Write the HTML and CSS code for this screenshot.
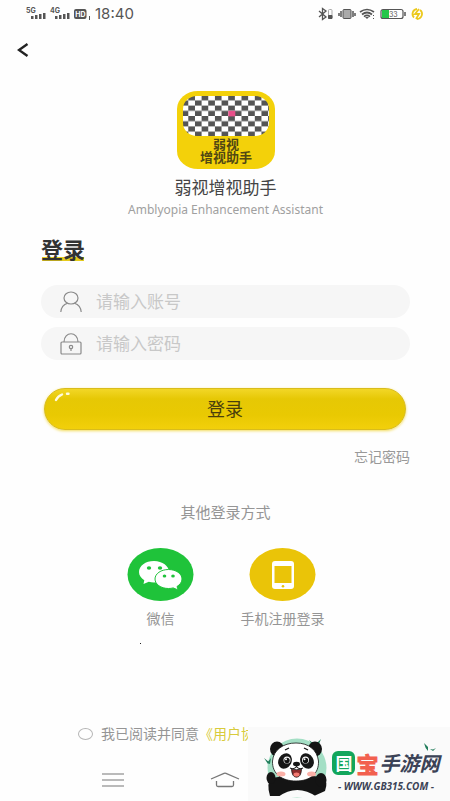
FILE: index.html
```html
<!DOCTYPE html>
<html lang="zh-CN">
<head>
<meta charset="utf-8">
<meta name="viewport" content="width=device-width, initial-scale=1">
<title>登录</title>
<link rel="stylesheet" href="styles.css">
</head>
<body>
<div class="screen">
  <header class="status">
    <div class="status-side">
      <svg width="65" height="14" viewBox="0 0 65 14" fill="#555">
        <g font-family="Inter, sans-serif" font-weight="700" font-size="7"><text x="0" y="6">5G</text><text x="24" y="6">4G</text></g>
        <path d="M5 9h2.500v3H5zM9 8h2.500v4H9zM13 7h2.500v5H13zM17 6h2.500v6H17zM29 9h2.500v3H29zM33 8h2.500v4H33zM37 7h2.500v5H37zM41 6h2.500v6H41z"/>
        <rect x="48" y="2" width="12.500" height="10" rx="2"/>
        <text x="49.300" y="9.500" fill="#fff" font-family="Inter, sans-serif" font-weight="700" font-size="7">HD</text>
        <path d="M63 9h1v4h-1z"/>
      </svg>
      <time class="clock">18:40</time>
    </div>
    <svg width="106" height="14" viewBox="0 0 106 14" fill="none" stroke="#555">
      <path d="M1 4l7 6-3.500 2.500v-11L8 4l-7 6" stroke-width="1.300"/>
      <rect x="10.500" y="2.500" width="3.500" height="9" rx="1" stroke="#aaa"/><path d="M10.500 8.500h3.500v3h-3.500z" fill="#555"/>
      <rect x="25" y="2.500" width="8" height="9" rx="1" fill="#aaa"/><path d="M23 4v6M35 4v6M21 6v3M37 6v3" stroke-width="1.500"/>
      <path d="M42 5q7-5 14 0M44 7.500q5-4 10 0M46 9.700q3-2.500 6 0" stroke-width="1.700"/><path d="M47 10h4l-2 2zM55 8h1v1h-1zM55 11h1v1h-1z" fill="#555" stroke="none"/>
      <rect x="63" y="2.500" width="22" height="9" rx="2" stroke-width="1.200"/><path d="M87 5v4" stroke-width="1.500"/>
      <path d="M64 3h7v8h-7z" fill="#25c64a" stroke="none"/>
      <text x="71" y="9.500" font-family="Inter, sans-serif" font-size="7" fill="#555" stroke="none">33</text>
      <path d="M96 10.500a5 5 0 0 1 3-8.500M102 3a5 5 0 0 1-3 9M101 2l-4 5h4l-3 5" stroke="#ecc91d" stroke-width="1.800"/>
    </svg>
  </header>

  <nav class="topbar">
    <button class="back" type="button" aria-label="返回">
      <svg width="12" height="14" viewBox="0 0 12 14" fill="none" stroke="#222" stroke-width="2.400"><path d="M10.500 1L2 7l8.500 6"/></svg>
    </button>
  </nav>

  <main class="content">
    <section class="brand">
      <svg class="logo" width="98" height="78" viewBox="0 0 98 78">
        <defs>
          <pattern id="check" x="11.300" y="4.200" width="13.300" height="10.400" patternUnits="userSpaceOnUse">
            <rect width="13.300" height="10.400" fill="#fff"/>
            <rect width="6.650" height="5.200" fill="#555"/><rect x="6.650" y="5.200" width="6.650" height="5.200" fill="#555"/>
          </pattern>
        </defs>
        <rect width="98" height="78" rx="21" ry="18" fill="#f3d10a"/>
        <rect x="6" y="5" width="86" height="40" rx="14" ry="13" fill="url(#check)"/>
        <rect x="51.300" y="19.800" width="7" height="5.600" fill="#e8508a"/>
        <g class="logo-text"><text x="49" y="58">弱视</text><text x="49" y="71">增视助手</text></g>
      </svg>
      <h1 class="app-name">弱视增视助手</h1>
      <p class="app-sub">Amblyopia Enhancement Assistant</p>
    </section>

    <form class="login">
      <h2 class="heading">登录</h2>
      <label class="field">
        <svg width="22" height="22" viewBox="0 0 22 22" fill="none" stroke="#8a8a8a" stroke-width="1.200"><ellipse cx="11" cy="7" rx="7" ry="6"/><path d="M.8 21c.4-5 3-7.500 6.700-8.700M14.500 12.300c3.700 1.200 6.300 3.700 6.700 8.700"/></svg>
        <input type="text" placeholder="请输入账号" aria-label="请输入账号">
      </label>
      <label class="field">
        <svg width="22" height="22" viewBox="0 0 22 22" fill="none" stroke="#8a8a8a" stroke-width="1.200"><rect x="1" y="9" width="20" height="12" rx="1"/><path d="M4 9c0-11 14-11 14 0"/><circle cx="11" cy="14" r="1.700"/><path d="M11 15.500V18"/></svg>
        <input type="password" placeholder="请输入密码" aria-label="请输入密码">
      </label>
      <button class="submit" type="submit">
        <svg class="shine" width="18" height="10" viewBox="0 0 18 10" fill="none" stroke="#fffbe0" stroke-width="2.400" stroke-linecap="round"><path d="M2 8q2-4 6-5.500M13 1.800h1.500"/></svg>
        登录
      </button>
      <a class="forgot" href="#">忘记密码</a>
    </form>

    <section class="other">
      <h3 class="other-title">其他登录方式</h3>
      <div class="options">
        <button class="option" type="button">
          <svg width="67" height="53" viewBox="0 0 67 53">
            <ellipse cx="33.500" cy="26.500" rx="33" ry="26.500" fill="#1fc33a"/>
            <path d="M27 13c-8.500 0-15 4.800-15 11 0 3.300 2 6.200 5.300 8.200L16.500 36l5.300-2.200c1.600.5 3.300.7 5.200.7 8.500 0 15-4.500 15-10.500S35.500 13 27 13z" fill="#fff"/>
            <path d="M41.500 21.500c-7.500 0-13.500 4.200-13.500 9.500s6 9.500 13.500 9.500c1.700 0 3.300-.2 4.700-.6l5 2.100-1.200-3.500c3-1.800 5-4.500 5-7.500 0-5.300-6-9.500-13.500-9.500z" fill="#fff" stroke="#1fc33a"/>
            <g fill="#1fc33a"><ellipse cx="22" cy="20" rx="2.200" ry="1.800"/><ellipse cx="33" cy="20" rx="2.200" ry="1.800"/><ellipse cx="37.500" cy="28" rx="1.800" ry="1.500"/><ellipse cx="46" cy="28" rx="1.800" ry="1.500"/></g>
          </svg>
          <span>微信</span>
        </button>
        <button class="option" type="button">
          <svg width="67" height="53" viewBox="0 0 67 53">
            <ellipse cx="33.500" cy="26.500" rx="33" ry="26.500" fill="#eac408"/>
            <rect x="23" y="13" width="22" height="28" rx="3" fill="#fff"/>
            <path d="M25.500 18h17v17h-17z" fill="#eac408"/><circle cx="34" cy="38.200" r="1.300" fill="#eac408"/>
          </svg>
          <span>手机注册登录</span>
        </button>
      </div>
      <div class="speck"></div>
    </section>

    <div class="agree">
      <input type="checkbox" id="agree">
      <label for="agree">我已阅读并同意<a href="#">《用户协议》</a></label>
    </div>
  </main>

  <nav class="sysnav">
    <button type="button" aria-label="菜单"><svg width="22" height="14" viewBox="0 0 22 14" stroke="#777" stroke-width="1.200"><path d="M0 1h22M0 7h22M0 13h22"/></svg></button>
    <button type="button" aria-label="主页"><svg width="30" height="16" viewBox="0 0 30 16" fill="none" stroke="#777" stroke-width="1.300"><path d="M1 7l13-5.700q1-.4 2 0L29 7M6.500 9v4q0 1.500 1.500 1.500h14q1.500 0 1.500-1.500V9"/></svg></button>
  </nav>

  <aside class="stamp">
    <svg class="panda" width="66" height="66" viewBox="4 3 66 66">
      <circle cx="37" cy="36" r="29.500" fill="#a4dfc5"/>
      <path d="M49 8l4 6 1-2zM57 11l4-4-2 5zM4 26l5 4-1 2zM7 31l4-5-1 6z" fill="#217d5b"/>
      <path d="M10 64Q6 50 12 46l25-4 24 3q8 4 4 14l-11 5z" fill="#141414"/>
      <path d="M18 65q19-14 39 0z" fill="#fafafa"/>
      <ellipse cx="11" cy="46" rx="4.500" ry="6" fill="#141414"/><ellipse cx="61" cy="48" rx="5.500" ry="7" fill="#141414"/>
      <ellipse cx="17" cy="17" rx="7" ry="7.500" fill="#141414"/><ellipse cx="55" cy="17" rx="7" ry="7.500" fill="#141414"/>
      <path d="M36 11c13 0 21 7 22.500 18C59 42 50 49 36 49S12 42 12.500 29C13.500 18 23 11 36 11z" fill="#fff" stroke="#141414" stroke-width=".8"/>
      <ellipse cx="25" cy="29" rx="6.500" ry="8" transform="rotate(30 25 29)" fill="#171717"/><ellipse cx="47" cy="29" rx="6.500" ry="8" transform="rotate(-30 47 29)" fill="#171717"/>
      <circle cx="27" cy="28" r="3.500" fill="#fff"/><circle cx="45.500" cy="28" r="3.500" fill="#fff"/>
      <circle cx="27" cy="28.500" r="2.700" fill="#111"/><circle cx="45.500" cy="28.500" r="2.700" fill="#111"/>
      <circle cx="26" cy="27.300" r="1" fill="#fff"/><circle cx="44.500" cy="27.300" r="1" fill="#fff"/>
      <path d="M25 18l4-2M44 16l4 2" stroke="#141414" stroke-width="1.300"/>
      <ellipse cx="36.500" cy="32" rx="3.500" ry="2.200" fill="#141414"/>
      <path d="M30 36q4 2 6.500-1.500Q39 38 43 36" fill="none" stroke="#141414" stroke-width="1.100"/>
      <path d="M31.500 37.200q5 1 10 0-.5 8-5 8t-5-8z" fill="#8e2c2c" stroke="#141414" stroke-width=".8"/><ellipse cx="36.500" cy="42.500" rx="3" ry="2" fill="#f47b72"/>
      <ellipse cx="21" cy="42" rx="4.500" ry="2.500" fill="#fbb0a7"/><ellipse cx="51.500" cy="42" rx="4.500" ry="2.500" fill="#fbb0a7"/>
    </svg>
    <div class="stamp-text">
      <svg class="leaf" width="12" height="9" viewBox="0 0 12 9" fill="#217d5b"><path d="M0 0l4 4v4Q1 5 0 0zM6 6l3 2 3-3-3 1.500z"/></svg>
      <strong class="stamp-name"><span class="green">国</span><span class="red">宝</span><i>手游网</i></strong>
      <span class="stamp-url">- WWW.GB315.COM -</span>
    </div>
  </aside>
</div>
</body>
</html>
```
FILE: styles.css
```css
* { box-sizing: border-box; }
body {
  margin: 0;
  background: #fefefe;
  color: #444;
  font-family: "Noto Sans", "Noto Sans CJK SC", sans-serif;
}
h1, h2, h3, p { margin: 0; font-weight: 400; }
button { border: 0; padding: 0; background: none; font: inherit; color: inherit; }
a { color: inherit; text-decoration: none; }
svg { display: block; flex: none; }

.screen {
  position: relative;
  display: flex;
  flex-direction: column;
  min-height: 100vh;
  overflow: hidden;
}
.status {
  display: flex;
  align-items: center;
  justify-content: space-between;
  height: 28px;
  padding: 0 26px;
}
.status-side { display: flex; align-items: center; gap: 4px; }
.clock { font: 15px/28px Inter, sans-serif; color: #555; }
.topbar { display: flex; align-items: center; height: 44px; padding: 0 17px; }

.content { display: flex; flex-direction: column; padding: 19px 40px 0 41px; }
.brand { display: flex; flex-direction: column; align-items: center; }
.logo-text {
  font: 700 13px "Noto Sans CJK SC", sans-serif;
  fill: #514813;
  text-anchor: middle;
}
.app-name { margin-top: 7px; font-size: 17px; line-height: 24px; }
.app-sub { font-size: 12px; line-height: 20px; color: #a0a0a0; }

.login { display: flex; flex-direction: column; margin-top: 16px; }
.heading {
  align-self: flex-start;
  margin-bottom: 21px;
  font-size: 22px;
  font-weight: 700;
  line-height: 26px;
  padding-bottom: 2px;
  color: #333;
  background: linear-gradient(#e6cb1c, #e6cb1c) center 21px / 42px 4px no-repeat;
}
.field {
  display: flex;
  align-items: center;
  gap: 14px;
  height: 33px;
  padding: 0 19px;
  border-radius: 17px;
  background: #f6f6f6;
}
.field + .field { margin-top: 9px; }
.field input {
  flex: 1;
  min-width: 0;
  padding: 0;
  border: 0;
  outline: 0;
  background: none;
  font: inherit;
  font-size: 17px;
  line-height: 24px;
}
.field input::placeholder { color: #c8c8c8; }
.submit {
  position: relative;
  height: 42px;
  margin: 28px 4px 0 3px;
  border: 1px solid #d9bc1c;
  border-radius: 21px;
  background: linear-gradient(#f2d727, #e6c805 25%, #e9c902 65%, #f2d00b);
  box-shadow: 0 1px 3px #f3dc5a;
  font-size: 18px;
  line-height: 24px;
  color: #4a3f0c;
}
.shine { position: absolute; left: 9px; top: 3px; }
.forgot {
  align-self: flex-end;
  margin-top: 17px;
  font-size: 14px;
  line-height: 20px;
  color: #999;
}

.other { display: flex; flex-direction: column; align-items: center; margin-top: 35px; color: #959595; }
.other-title { font-size: 15px; line-height: 20px; }
.options { display: grid; grid-template-columns: 122px 122px; margin: 26px 8px 0 0; }
.option {
  display: flex;
  flex-direction: column;
  align-items: center;
  gap: 8px;
  font-size: 14px;
  line-height: 20px;
}
.speck { align-self: flex-start; width: 1px; height: 1px; margin: 14px 0 0 99px; background: #222; }

.agree {
  display: flex;
  align-items: center;
  gap: 8px;
  margin: 80px 0 0 37px;
  font-size: 14px;
  line-height: 20px;
  color: #959595;
  white-space: nowrap;
}
.agree input {
  appearance: none;
  flex: none;
  width: 15px;
  height: 12px;
  margin: 0;
  border: 1px solid #b5b5b5;
  border-radius: 50%;
}
.agree a { color: #d8cb3c; }

.sysnav {
  display: grid;
  grid-template-columns: repeat(3, 1fr);
  place-items: center;
  height: 32px;
  margin-top: 20px;
  padding: 0 57px;
}

.stamp {
  position: absolute;
  right: 0;
  bottom: 0;
  display: flex;
  width: 202px;
  height: 74px;
  padding: 8px 8px 0 16px;
  background: #fafafa;
}
.stamp-text {
  position: relative;
  display: flex;
  flex-direction: column;
  align-items: center;
  flex: 1;
  padding-top: 12px;
  white-space: nowrap;
}
.leaf { position: absolute; right: 6px; top: 8px; }
.stamp-name {
  display: flex;
  align-items: center;
  gap: 1px;
  font: 700 20px/32px "Noto Sans CJK SC", sans-serif;
  color: #3b4256;
}
.green {
  padding: 0 1px;
  border: 2px solid #12a65c;
  border-radius: 6px;
  background: #12a65c;
  color: #fff;
  font-size: 17px;
  line-height: 20px;
}
.red { font-size: 22px; -webkit-text-stroke: 1px currentColor; color: #f2604f; }
.stamp-url { font: italic 700 10px/14px "Open Sans", sans-serif; color: #3b4256; }
```
